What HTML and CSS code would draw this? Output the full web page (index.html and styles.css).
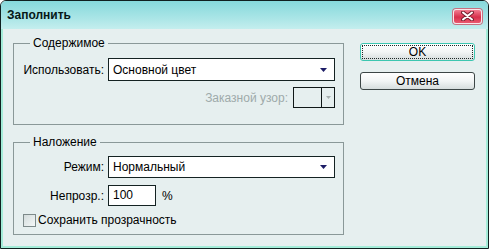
FILE: index.html
```html
<!DOCTYPE html>
<html lang="ru">
<head>
    <meta charset="UTF-8">
    <title>Заполнить</title>
    <link rel="stylesheet" href="styles.css">
</head>
<body>
<div class="window">
    <div class="titlebar">
        <span class="title">Заполнить</span>
        <div class="close">
            <svg width="13" height="10" viewBox="0 0 13 10">
                <path d="M2 1.5 L11 8.5 M11 1.5 L2 8.5" stroke="#7a2030" stroke-width="4" stroke-linecap="round"/>
                <path d="M2 1.5 L11 8.5 M11 1.5 L2 8.5" stroke="#ffffff" stroke-width="2" stroke-linecap="round"/>
            </svg>
        </div>
    </div>
    <div class="client">
        <div class="main">
            <fieldset class="group first">
                <legend>Содержимое</legend>
                <div class="row">
                    <label class="lbl">Использовать:</label>
                    <div class="select">
                        <span>Основной цвет</span>
                        <svg class="arrow" width="7" height="4" viewBox="0 0 7 4"><path d="M0 0 H7 L3.5 4 Z" fill="#1c1c66"/></svg>
                    </div>
                </div>
                <div class="row pattern-row">
                    <span class="lbl dim">Заказной узор:</span>
                    <div class="pattern">
                        <div class="swatch"></div>
                        <div class="pick">
                            <svg width="5" height="3" viewBox="0 0 5 3"><path d="M0 0 H5 L2.5 3 Z" fill="#a8b0b0"/></svg>
                        </div>
                    </div>
                </div>
            </fieldset>
            <fieldset class="group second">
                <legend>Наложение</legend>
                <div class="row">
                    <label class="lbl">Режим:</label>
                    <div class="select">
                        <span>Нормальный</span>
                        <svg class="arrow" width="7" height="4" viewBox="0 0 7 4"><path d="M0 0 H7 L3.5 4 Z" fill="#1c1c66"/></svg>
                    </div>
                </div>
                <div class="row opacity-row">
                    <label class="lbl">Непрозр.:</label>
                    <div class="field">100</div>
                    <span class="unit">%</span>
                </div>
                <div class="row check-row">
                    <span class="checkbox"></span>
                    <span>Сохранить прозрачность</span>
                </div>
            </fieldset>
        </div>
        <div class="buttons">
            <button class="btn focused"><span>OK</span></button>
            <button class="btn"><span>Отмена</span></button>
        </div>
    </div>
</div>
</body>
</html>
```

FILE: styles.css
```css
body {
    margin: 0;
    background: #ffffff;
}

.window, button {
    font-family: "Liberation Sans", Arial, sans-serif;
    font-size: 12px;
    color: #000000;
}

.window {
    width: 489px;
    height: 249px;
    box-sizing: border-box;
    border: 1px solid #102020;
    border-radius: 6px 6px 0 0;
    background: #e6efef;
    display: flex;
    flex-direction: column;
    overflow: hidden;
}

.titlebar {
    height: 28px;
    flex: none;
    display: flex;
    align-items: center;
    justify-content: space-between;
    padding: 0 6px 0 6px;
    background: linear-gradient(#86d9dc, #a9e5e6 60%, #c4eeee);
}

.title {
    font-weight: bold;
    font-size: 12px;
    color: #061818;
}

.close {
    width: 27px;
    height: 13px;
    margin-top: 2px;
    border: 1px solid #fbe6ea;
    border-radius: 3px;
    background: linear-gradient(#f27c90, #d8304c 55%, #e85a70);
    display: flex;
    align-items: center;
    justify-content: center;
    box-shadow: 0 0 0 1px #c87080;
}

.client {
    flex: 1;
    display: flex;
    border: 2px solid #a4ecd8;
    border-top: none;
    padding: 0 12px 0 10px;
}

.main {
    width: 331px;
}

.group {
    margin: 0;
    padding: 0 8px;
    border: 1px solid #8a9898;
    box-sizing: border-box;
}

.group legend {
    margin-left: 8px;
    padding: 0 3px;
    line-height: 14px;
}

.first {
    margin-top: 7px;
    height: 89px;
}

.second {
    margin-top: 10px;
    height: 100px;
}

.row {
    display: flex;
    align-items: center;
}

.first .row:first-of-type {
    margin-top: 8px;
}

.second .row:first-of-type {
    margin-top: 7px;
}

.lbl {
    width: 82px;
    margin-right: 4px;
    text-align: right;
    white-space: nowrap;
}

.dim {
    color: #9eaaaa;
    width: auto;
    margin-right: 5px;
}

.select {
    width: 227px;
    height: 23px;
    box-sizing: border-box;
    border: 1px solid #142222;
    background: #ffffff;
    display: flex;
    align-items: center;
    justify-content: space-between;
    padding: 0 7px 0 4px;
}

.second .select {
    height: 22px;
}

.pattern-row {
    justify-content: flex-end;
    margin-top: 6px;
}

.pattern {
    width: 42px;
    height: 21px;
    box-sizing: border-box;
    border: 1px solid #101818;
    display: flex;
}

.swatch {
    width: 27px;
    border-right: 1px solid #101818;
}

.pick {
    flex: 1;
    display: flex;
    align-items: center;
    justify-content: center;
}

.opacity-row {
    margin-top: 7px;
}

.field {
    width: 48px;
    height: 21px;
    box-sizing: border-box;
    border: 1px solid #142222;
    background: #ffffff;
    padding-left: 4px;
    line-height: 19px;
}

.unit {
    margin-left: 6px;
}

.check-row {
    margin-top: 7px;
    padding-left: 1px;
}

.checkbox {
    width: 13px;
    height: 13px;
    box-sizing: border-box;
    border: 1px solid #7d8a8a;
    background: linear-gradient(135deg, #d4dcdc, #f4f8f8);
    margin-right: 2px;
}

.buttons {
    margin-left: 16px;
    padding-top: 14px;
    display: flex;
    flex-direction: column;
    gap: 11px;
}

.btn {
    width: 115px;
    height: 18px;
    padding: 0;
    border: 1px solid #3c4646;
    border-radius: 3px;
    background: linear-gradient(#ffffff, #f2f5f5 50%, #d6dddd);
    display: flex;
    align-items: center;
    justify-content: center;
}

.focused {
    border-color: #3cc6b0;
    padding: 1px;
}

.focused span {
    flex: 1;
    align-self: stretch;
    border: 1px dotted #202828;
    line-height: 12px;
}
```
